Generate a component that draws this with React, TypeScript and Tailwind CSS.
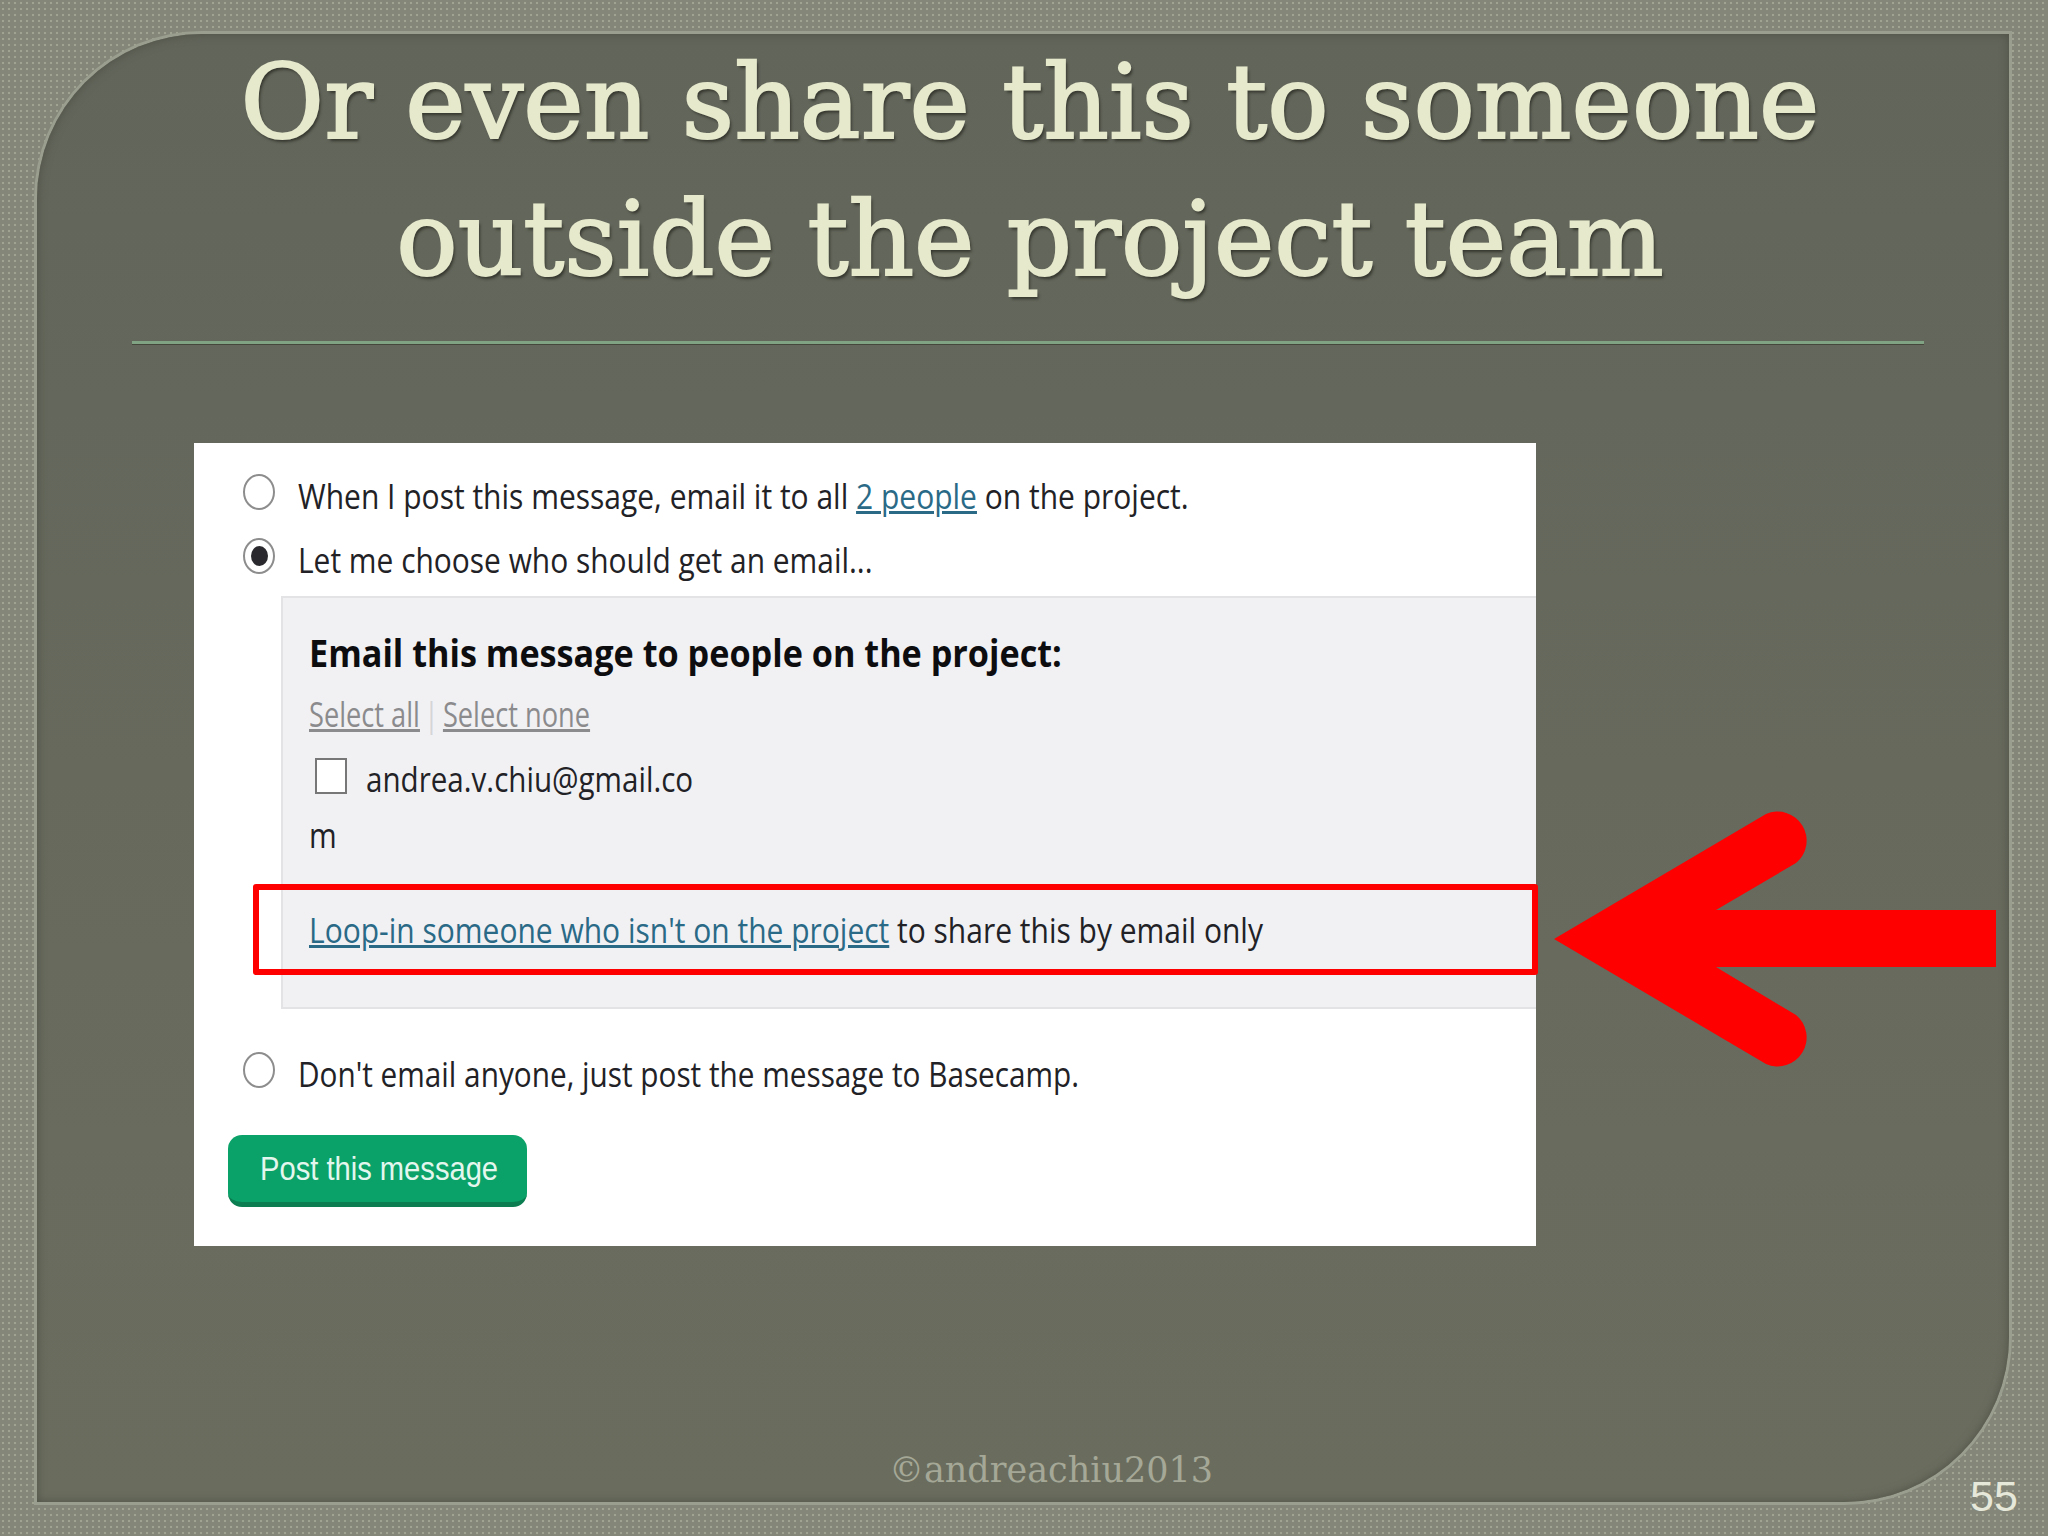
const squeezed = "block origin-left whitespace-nowrap";

function Radio({ checked = false }: { checked?: boolean }) {
  return (
    <span className="mt-[3px] flex h-[36px] w-[32px] shrink-0 items-center justify-center rounded-[50%] border-2 border-[#8d8d8d] bg-white">
      {checked && <span className="h-[20px] w-[17px] rounded-[50%] bg-[#2a2a2e]" />}
    </span>
  );
}

export default function App() {
  return (
    <div className="relative h-[1536px] w-[2048px] overflow-hidden bg-[#838678] bg-[radial-gradient(#a0a392_1.2px,transparent_1.6px)] bg-[length:6px_6px] pl-[37px] pt-[34px] font-['Open_Sans',sans-serif]">
      <div className="flex h-[1468px] w-[1972px] flex-col rounded-br-[165px] rounded-tl-[165px] bg-gradient-to-b from-[#62655a] to-[#6a6d5e] shadow-[0_0_0_3px_#9a9e8e,inset_0_0_10px_#4e5046]">
        <h1 className="pl-[14px] text-center font-['DejaVu_Serif',serif] text-[102px] leading-[137px] text-[#e6e9cc] [-webkit-text-stroke:2px_#e6e9cc] [text-shadow:2px_3px_3px_#35372e]">
          <span className="block whitespace-nowrap">Or even share this to someone</span>
          <span className="block whitespace-nowrap">outside the project team</span>
        </h1>
        <div className="ml-[95px] mt-[33px] h-[3px] w-[1792px] bg-[#7fa383] shadow-[0_1px_0_#45473c]" />

        <div className="relative ml-[157px] mt-[99px] h-[803px] w-[1342px] bg-white pt-[28px] text-[34px] text-[#222226]">
          <div className="flex h-[50px] pl-[49px]">
            <Radio />
            <span className={`${squeezed} ml-[23px] scale-x-[0.882] self-center`}>
              When I post this message, email it to all{" "}
              <span className="text-[#2a6a87] underline">2 people</span> on the project.
            </span>
          </div>
          <div className="mt-[14px] flex h-[50px] pl-[49px]">
            <Radio checked />
            <span className={`${squeezed} ml-[23px] scale-x-[0.88] self-center`}>Let me choose who should get an email...</span>
          </div>

          <div className="ml-[87px] mt-[11px] h-[413px] border-y-2 border-l-2 border-[#e3e3e5] bg-[#f1f1f4] pl-[26px] pt-[29px]">
            <h2 className={`${squeezed} scale-x-[0.9] text-[38px] font-bold leading-[50px] text-[#0d0d10]`}>
              Email this message to people on the project:
            </h2>
            <div className={`${squeezed} mt-[15px] scale-x-[0.8] leading-[44px] text-[#8b8b8d]`}>
              <span className="underline">Select all</span>
              <span className="mx-[5px] text-[#d5d5d8]">|</span>
              <span className="underline">Select none</span>
            </div>
            <div className="mt-[20px] flex h-[40px] items-center pl-[6px]">
              <span className="h-[36px] w-[32px] shrink-0 border-2 border-[#777] bg-white" />
              <span className={`${squeezed} ml-[19px] mt-[6px] scale-x-[0.87]`}>andrea.v.chiu@gmail.co</span>
            </div>
            <div className={`${squeezed} mt-[17px] scale-x-[0.88] leading-[44px]`}>m</div>
            <div className={`${squeezed} mt-[48px] scale-x-[0.882] leading-[50px]`}>
              <span className="text-[#2a6a87] underline">Loop-in someone who isn't on the project</span> to
              share this by email only
            </div>
          </div>

          <div className="mt-[40px] flex h-[50px] pl-[49px]">
            <Radio />
            <span className={`${squeezed} ml-[23px] scale-x-[0.875] self-center`}>Don't email anyone, just post the message to Basecamp.</span>
          </div>
          <button className="ml-[34px] mt-[36px] flex h-[72px] w-[299px] items-center rounded-[14px] border-b-[5px] border-[#0b7d50] bg-[#0aa268] pl-[32px] font-['Liberation_Sans',sans-serif] text-[34px] text-[#e4f7ee]">
            <span className={`${squeezed} scale-x-[0.857]`}>Post this message</span>
          </button>

          {/* red highlight drawn on top of the form */}
          <div className="absolute left-[59px] top-[441px] h-[91px] w-[1285px] rounded-[3px] border-[6px] border-[#fe0000]" />
        </div>

        <div className="mt-auto pb-[10px] pl-[56px] text-center font-['DejaVu_Serif',serif] text-[35px] leading-[44px] text-[#a5a897]">
          ©andreachiu2013
        </div>
      </div>

      <svg className="absolute left-[1554px] top-[810px] h-[258px] w-[443px]" viewBox="1554 810 443 258">
        <path
          d="M1554 939 L1766 814 A29 29 0 0 1 1796 863 L1716 910 L1996 910 L1996 967 L1716 967 L1796 1015 A29 29 0 0 1 1766 1064 Z"
          fill="#fe0000"
        />
      </svg>
      <div className="absolute left-[1970px] top-[1474px] font-['Liberation_Sans',sans-serif] text-[43px] leading-[44px] text-[#e6e8da]">
        55
      </div>
    </div>
  );
}
